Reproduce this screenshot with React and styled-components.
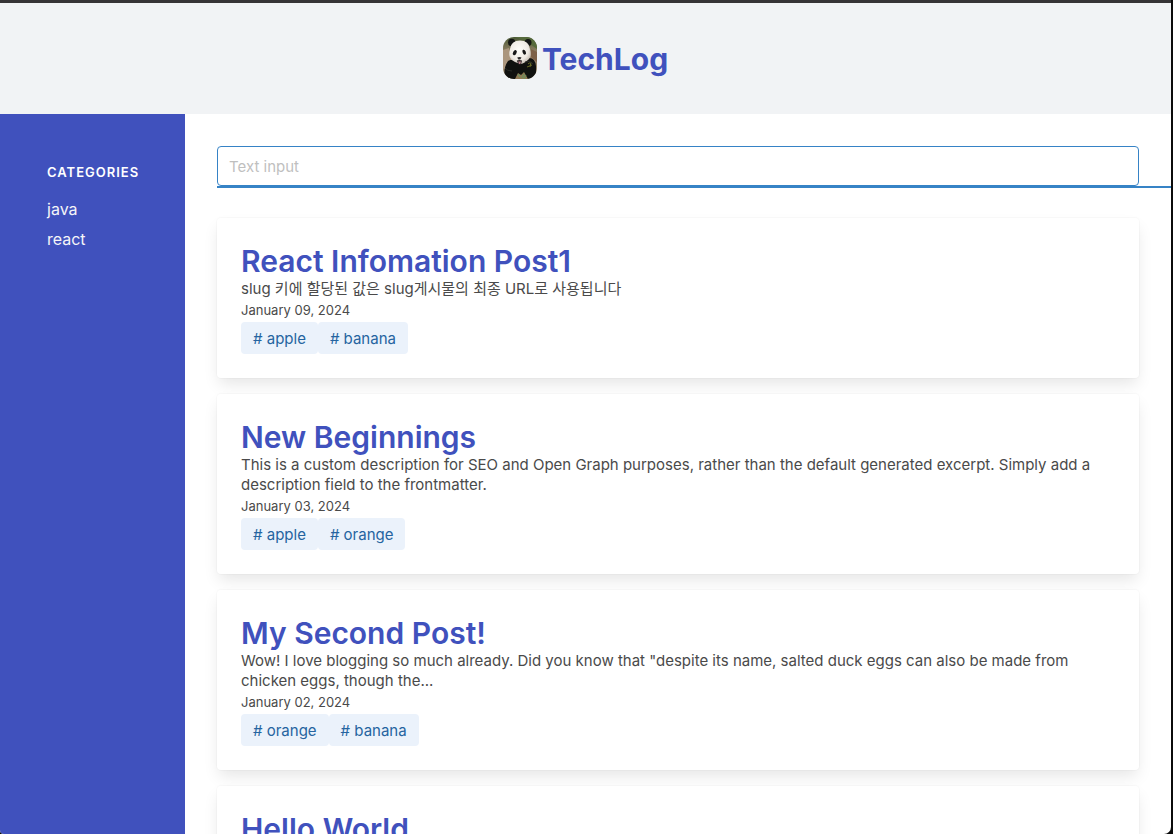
import React from "react";
import styled, { createGlobalStyle } from "styled-components";

const GlobalStyle = createGlobalStyle`
  *, *::before, *::after { box-sizing: border-box; }
  body {
    margin: 0;
    background: #0b0b0b;
    color: #4a4a4a;
    font-family: Inter, "Noto Sans CJK KR", sans-serif;
    font-size: 15px;
    line-height: 20px;
  }
  h1, h2, p, ul { margin: 0; padding: 0; }
  a { text-decoration: none; }
`;

const Frame = styled.div`
  display: flex;
  flex-direction: column;
  height: 100vh;
  overflow: hidden;
  margin-right: 2px;
  border-top: 3px solid #363436;
  border-radius: 0 0 7px 4px;
  background: #fff;
`;

const Header = styled.header`
  display: flex;
  flex: none;
  align-items: center;
  justify-content: center;
  padding: 34px 24px 35px;
  background: #f1f3f5;
`;

const Brand = styled.a`
  display: flex;
  align-items: center;
  gap: 5px;
  color: #4051bd;
`;

const Avatar = styled.svg`
  display: block;
  width: 34px;
  height: 42px;
  border-radius: 11px;
`;

const BrandName = styled.h1`
  padding-top: 2px;
  font-size: 30px;
  font-weight: 700;
  line-height: 36px;
`;

const Body = styled.div`
  display: flex;
  flex: 1;
  min-height: 0;
`;

const Sidebar = styled.nav`
  flex: none;
  width: 185px;
  padding: 48px 47px;
  background: #4051bd;
  color: #fff;
`;

const SidebarTitle = styled.h2`
  margin-bottom: 12px;
  font-size: 13px;
  font-weight: 600;
  letter-spacing: 1px;
  line-height: 20px;
  text-transform: uppercase;
`;

const CategoryList = styled.ul`
  list-style: none;
`;

const CategoryLink = styled.a`
  display: block;
  padding: 5px 0;
  color: #f5f5f8;
  font-size: 16px;
`;

const Main = styled.main`
  flex: 1;
  min-width: 0;
  padding: 32px;
`;

const SearchBar = styled.form`
  margin: 0 -32px 30px 0;
  padding-right: 32px;
  border-bottom: 2px solid #3683c6;
`;

const SearchInput = styled.input`
  display: block;
  width: 100%;
  height: 40px;
  padding: 0 11px;
  border: 1px solid #3683c6;
  border-radius: 4px;
  outline: none;
  background: #fff;
  color: #363636;
  font: inherit;
  &::placeholder { color: #bfbfbf; opacity: 1; }
`;

const PostList = styled.div`
  display: flex;
  flex-direction: column;
  gap: 16px;
`;

const Card = styled.article`
  padding: 25px 24px 24px;
  border-radius: 4px;
  background: #fff;
  box-shadow: 0 8px 16px -2px rgba(10, 10, 10, 0.1), 0 0 0 1px rgba(10, 10, 10, 0.02);
`;

const PostTitle = styled.h2`
  font-size: 30px;
  font-weight: 600;
  line-height: 36px;
  a { color: #4051bd; }
`;

const PostDate = styled.time`
  display: block;
  font-size: 13px;
  line-height: 23px;
`;

const Tags = styled.div`
  display: flex;
`;

const Tag = styled.a`
  padding: 7px 12px 5px;
  border-radius: 4px;
  background: #ebf2fb;
  color: #2564a0;
`;

const categories = ["java", "react"];

const posts = [
  {
    title: "React Infomation Post1",
    text: "slug 키에 할당된 값은 slug게시물의 최종 URL로 사용됩니다",
    date: "January 09, 2024",
    iso: "2024-01-09",
    tags: ["apple", "banana"],
  },
  {
    title: "New Beginnings",
    text: "This is a custom description for SEO and Open Graph purposes, rather than the default generated excerpt. Simply add a description field to the frontmatter.",
    date: "January 03, 2024",
    iso: "2024-01-03",
    tags: ["apple", "orange"],
  },
  {
    title: "My Second Post!",
    text: "Wow! I love blogging so much already. Did you know that \"despite its name, salted duck eggs can also be made from chicken eggs, though the...",
    date: "January 02, 2024",
    iso: "2024-01-02",
    tags: ["orange", "banana"],
  },
  { title: "Hello World" },
];

function Panda() {
  return (
    <Avatar viewBox="0 0 34 42" role="img" aria-label="Panda">
      <defs>
        <linearGradient id="foliage" x1="0" y1="0" x2="0" y2="1">
          <stop offset="0" stopColor="#4b5a36" />
          <stop offset="0.4" stopColor="#98836a" />
          <stop offset="1" stopColor="#8a7a5c" />
        </linearGradient>
        <radialGradient id="fur" cx="0.45" cy="0.4" r="0.62">
          <stop offset="0" stopColor="#fffefa" />
          <stop offset="0.7" stopColor="#efeae3" />
          <stop offset="1" stopColor="#c4bab0" />
        </radialGradient>
      </defs>
      <rect width="34" height="42" fill="url(#foliage)" />
      <path d="M0 13 6 11 8 26 0 33Z" fill="#ab967e" />
      <path d="M12 0H34V12L27 7 20 3Z" fill="#566a3c" />
      <path d="M28 12 34 15V25L28 20Z" fill="#7d6148" />
      <path d="M5 24Q10 21 16 25L25 21Q32 20 33 29V42H24L20 37 13 42H2Q0 31 5 24Z" fill="#10110f" />
      <circle cx="8.7" cy="5.4" r="3.7" fill="#141513" />
      <circle cx="25" cy="5.4" r="3.5" fill="#141513" />
      <path d="M7 12Q8 3.5 17 3.5T27 12Q29 19 26 22Q21 27 17 27Q11 25 8 22.5Q5 18 7 12Z" fill="url(#fur)" />
      <ellipse cx="11.8" cy="15.6" rx="1.7" ry="2.8" fill="#171717" transform="rotate(28 11.8 15.6)" />
      <ellipse cx="21.2" cy="15.2" rx="1.6" ry="2.6" fill="#171717" transform="rotate(-24 21.2 15.2)" />
      <path d="M14.2 20.5Q16.5 19.4 18.5 20.5L17.2 22.4H15.3Z" fill="#292727" />
      <path d="M13.8 23.5Q16.5 22.3 19 23.5L18 27.5H15.5Z" fill="#282020" />
      <path d="M15.2 24.5H18L17.3 27H16Z" fill="#bc8790" />
      <path d="M12 42 15 36 18 38 21 35 25 42Z" fill="#8f7952" />
      <path d="M15 37 17 40M21 37 19 41M23 38 21 42" stroke="#5d9560" strokeWidth="1" />
      <path d="M25 27 28 25 27 30M24 30 29 28" stroke="#6a6c24" strokeWidth="1" fill="none" />
      <path d="M2 31Q4 34 9 34M22 25Q26 23 30 27" stroke="#292b27" fill="none" />
    </Avatar>
  );
}

function Post({ post }) {
  return (
    <Card>
      <PostTitle><a href="#post">{post.title}</a></PostTitle>
      {post.text && <p>{post.text}</p>}
      {post.date && <PostDate dateTime={post.iso}>{post.date}</PostDate>}
      {post.tags && (
        <Tags>
          {post.tags.map((tag) => <Tag key={tag} href={`#${tag}`}># {tag}</Tag>)}
        </Tags>
      )}
    </Card>
  );
}

export default function App() {
  return (
    <>
      <GlobalStyle />
      <Frame>
        <Header>
          <Brand href="#home">
            <Panda />
            <BrandName>TechLog</BrandName>
          </Brand>
        </Header>
        <Body>
          <Sidebar aria-label="Categories">
            <SidebarTitle>Categories</SidebarTitle>
            <CategoryList>
              {categories.map((name) => (
                <li key={name}><CategoryLink href={`#${name}`}>{name}</CategoryLink></li>
              ))}
            </CategoryList>
          </Sidebar>
          <Main>
            <SearchBar role="search">
              <SearchInput type="text" placeholder="Text input" aria-label="Search posts" />
            </SearchBar>
            <PostList>
              {posts.map((post) => <Post key={post.title} post={post} />)}
            </PostList>
          </Main>
        </Body>
      </Frame>
    </>
  );
}
